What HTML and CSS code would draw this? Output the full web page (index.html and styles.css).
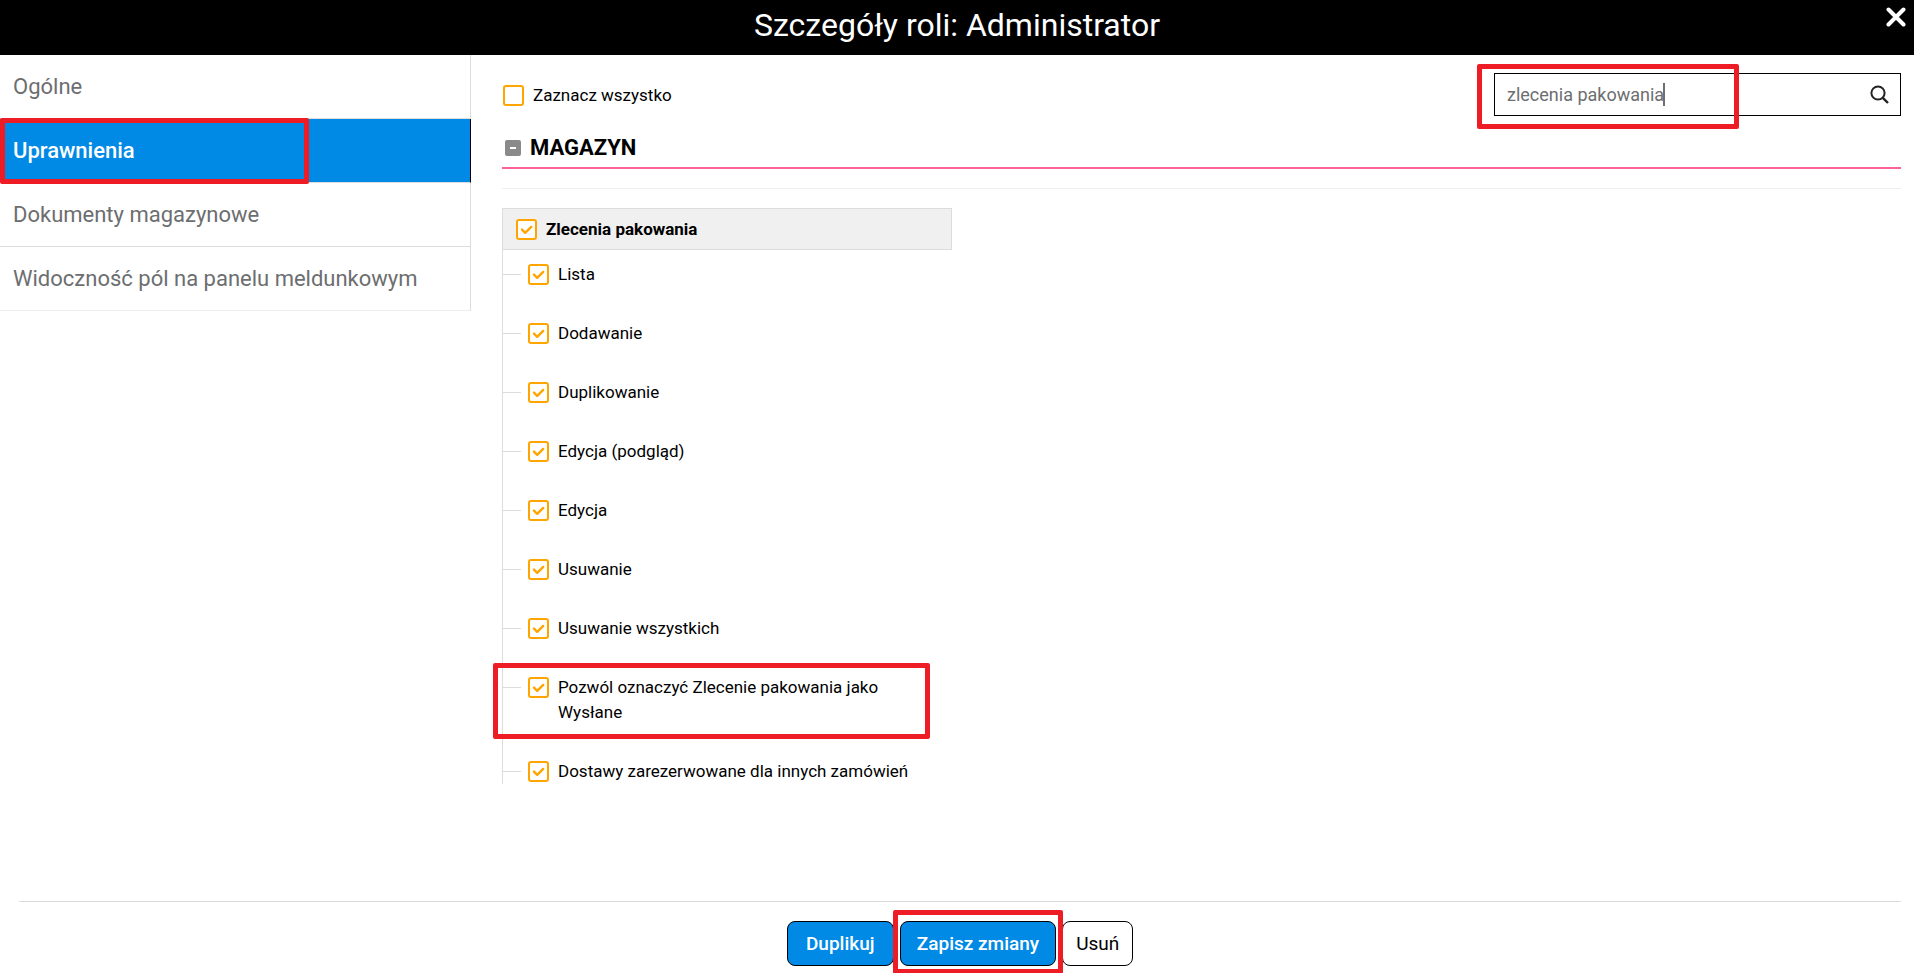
FILE: index.html
```html
<!DOCTYPE html>
<html lang="pl">
<head>
<meta charset="utf-8">
<title>Szczegóły roli: Administrator</title>
<link rel="stylesheet" href="styles.css">
</head>
<body>
<svg class="sprite" aria-hidden="true">
  <symbol id="tick" viewBox="0 0 21 21"><path d="M6 10.6 9.2 13.8 15.2 7.9" fill="none" stroke="#ffa500" stroke-width="2.4" stroke-linecap="round" stroke-linejoin="round"/></symbol>
</svg>
<header class="topbar">
  <h1 class="topbar-title">Szczegóły roli: Administrator</h1>
  <button class="close" type="button" aria-label="Zamknij"><svg width="20" height="20" viewBox="0 0 20 20"><path d="M2.5 2.5 17.5 17.5M17.5 2.5 2.5 17.5" stroke="#fff" stroke-width="4" stroke-linecap="round"/></svg></button>
</header>
<div class="body">
  <nav class="side">
    <a class="side-link" href="#ogolne">Ogólne</a>
    <a class="side-link active mark" href="#uprawnienia">Uprawnienia</a>
    <a class="side-link" href="#dokumenty">Dokumenty magazynowe</a>
    <a class="side-link" href="#widocznosc">Widoczność pól na panelu meldunkowym</a>
  </nav>
  <main class="content">
    <div class="toolbar">
      <label class="option"><span class="box"><input type="checkbox"></span><span>Zaznacz wszystko</span></label>
      <div class="search mark">
        <input class="search-input" type="text" value="zlecenia pakowania" aria-label="Szukaj">
        <span class="caret"></span>
        <button class="search-button" type="button" aria-label="Szukaj"><svg width="20" height="20" viewBox="0 0 20 20"><circle cx="8" cy="8" r="6.6" fill="none" stroke="#222" stroke-width="2"/><path d="M12.8 12.8 18 18" stroke="#222" stroke-width="2.4"/></svg></button>
      </div>
    </div>
    <h2 class="section">
      <button class="toggle" type="button" aria-label="Zwiń"><svg width="16" height="16" viewBox="0 0 16 16"><rect width="16" height="16" rx="2" fill="#8a8a8a"/><path d="M5 8H11" stroke="#fff" stroke-width="2"/></svg></button>
      MAGAZYN
    </h2>
    <hr class="rule">
    <section class="group">
      <label class="option group-head"><span class="box"><input type="checkbox" checked><svg><use href="#tick"/></svg></span><span>Zlecenia pakowania</span></label>
      <ul class="tree">
        <li><label class="option"><span class="box"><input type="checkbox" checked><svg><use href="#tick"/></svg></span><span>Lista</span></label></li>
        <li><label class="option"><span class="box"><input type="checkbox" checked><svg><use href="#tick"/></svg></span><span>Dodawanie</span></label></li>
        <li><label class="option"><span class="box"><input type="checkbox" checked><svg><use href="#tick"/></svg></span><span>Duplikowanie</span></label></li>
        <li><label class="option"><span class="box"><input type="checkbox" checked><svg><use href="#tick"/></svg></span><span>Edycja (podgląd)</span></label></li>
        <li><label class="option"><span class="box"><input type="checkbox" checked><svg><use href="#tick"/></svg></span><span>Edycja</span></label></li>
        <li><label class="option"><span class="box"><input type="checkbox" checked><svg><use href="#tick"/></svg></span><span>Usuwanie</span></label></li>
        <li><label class="option"><span class="box"><input type="checkbox" checked><svg><use href="#tick"/></svg></span><span>Usuwanie wszystkich</span></label></li>
        <li class="mark"><label class="option"><span class="box"><input type="checkbox" checked><svg><use href="#tick"/></svg></span><span>Pozwól oznaczyć Zlecenie pakowania jako Wysłane</span></label></li>
        <li><label class="option"><span class="box"><input type="checkbox" checked><svg><use href="#tick"/></svg></span><span>Dostawy zarezerwowane dla innych zamówień</span></label></li>
      </ul>
    </section>
  </main>
</div>
<footer class="actions">
  <button class="btn primary" type="button">Duplikuj</button>
  <span class="mark save"><button class="btn primary" type="button">Zapisz zmiany</button></span>
  <button class="btn" type="button">Usuń</button>
</footer>
</body>
</html>
```
FILE: styles.css
```css
* { box-sizing: border-box; }

body {
  margin: 0;
  min-height: 100vh;
  display: flex;
  flex-direction: column;
  background: #fff;
  color: #000;
  font: 17px/25px Roboto, "Liberation Sans", sans-serif;
}

button, input { font: inherit; }

.sprite { display: none; }

.topbar {
  position: relative;
  display: flex;
  justify-content: center;
  background: #000;
  color: #fff;
  padding: 9px 12px 14px;
}

.topbar-title { margin: 0; font-size: 32px; line-height: 32px; font-weight: 400; }

.close {
  position: absolute;
  top: 7px;
  right: 8px;
  padding: 0;
  border: 0;
  background: none;
  line-height: 0;
}

.body { flex: 1; display: flex; align-items: flex-start; }

.side { flex: 0 0 471px; display: flex; flex-direction: column; }

.side-link {
  padding: 16px 14px 15px 13px;
  border-right: 1px solid #dcdcdc;
  border-bottom: 1px solid #dcdcdc;
  color: #6c6e70;
  font-size: 22px;
  line-height: 32px;
  text-decoration: none;
}

.side-link:last-child { border-bottom-color: #eee; }

.side-link.active {
  background: #008ae6;
  border-right-color: #000;
  color: #fff;
  font-weight: 500;
}

/* red highlight frame drawn over the marked element */
.mark { position: relative; }

.mark::after {
  content: "";
  position: absolute;
  border: 5px solid #ee1c25;
  border-radius: 2px;
  pointer-events: none;
}

.side-link.mark::after { inset: -1px 161px -2px 0; }
.search.mark::after { inset: -10px 161px -14px -18px; }
.tree .mark::after { inset: -12px 22px -14px -10px; }
.save.mark::after { inset: -11px -7px -8px -7px; }

.content { flex: 1; min-width: 0; padding: 18px 13px 0 31px; }

.toolbar { display: flex; justify-content: space-between; }

.toolbar .option { margin: 10px 0 0 1px; align-self: flex-start; }

.option { display: flex; gap: 9px; }

.box { flex: none; display: grid; width: 21px; height: 21px; margin-top: 2px; }

.box > * { grid-area: 1 / 1; width: 21px; height: 21px; margin: 0; pointer-events: none; }

.box input {
  appearance: none;
  border: 2px solid #ffa500;
  border-radius: 3px;
  background: #fff;
}

.search {
  display: flex;
  align-items: center;
  width: 407px;
  height: 43px;
  border: 1px solid #000;
}

.search-input {
  flex: 1;
  min-width: 0;
  padding: 0 0 0 12px;
  border: 0;
  outline: 0;
  background: none;
  color: #6c6e70;
  font-size: 18px;
}

.caret { position: absolute; left: 168px; top: 9px; width: 2px; height: 23px; background: #6c6e70; }

.search-button { padding: 0 10px 0 0; border: 0; background: none; line-height: 0; }

.section {
  display: flex;
  align-items: center;
  gap: 9px;
  margin: 16px 0 0;
  padding: 0 0 3px 3px;
  border-bottom: 2px solid #ff6096;
  font-size: 22px;
  line-height: 32px;
}

.toggle { padding: 0; border: 0; background: none; line-height: 0; }

.rule { margin: 19px 0; border: 0; border-top: 1px solid #eee; }

.group { width: 450px; }

.group-head {
  padding: 8px 13px 7px;
  border: 1px solid #dcdcdc;
  background: #f0f0f0;
  font-weight: 700;
}

.tree {
  display: flex;
  flex-direction: column;
  gap: 34px;
  margin: 0;
  padding: 12px 0 0;
  border-left: 1px solid #dcdcdc;
  list-style: none;
}

.tree li { display: grid; grid-template-columns: 18px 1fr; column-gap: 7px; }

.tree li::before { content: ""; height: 1px; margin-top: 12px; background: #dcdcdc; }

.tree .option { padding-right: 20px; }

.actions {
  display: flex;
  justify-content: center;
  gap: 6px;
  margin: 0 13px 0 19px;
  padding: 19px 0 7px;
  border-top: 1px solid #dcdcdc;
}

.btn {
  padding: 9px 13px;
  border: 1px solid #000;
  border-radius: 8px;
  background: #fff;
  color: #000;
  font-size: 19px;
  line-height: 25px;
}

.btn.primary { min-width: 107px; padding: 9px 16px; background: #008ae6; color: #fff; font-weight: 500; }
```
